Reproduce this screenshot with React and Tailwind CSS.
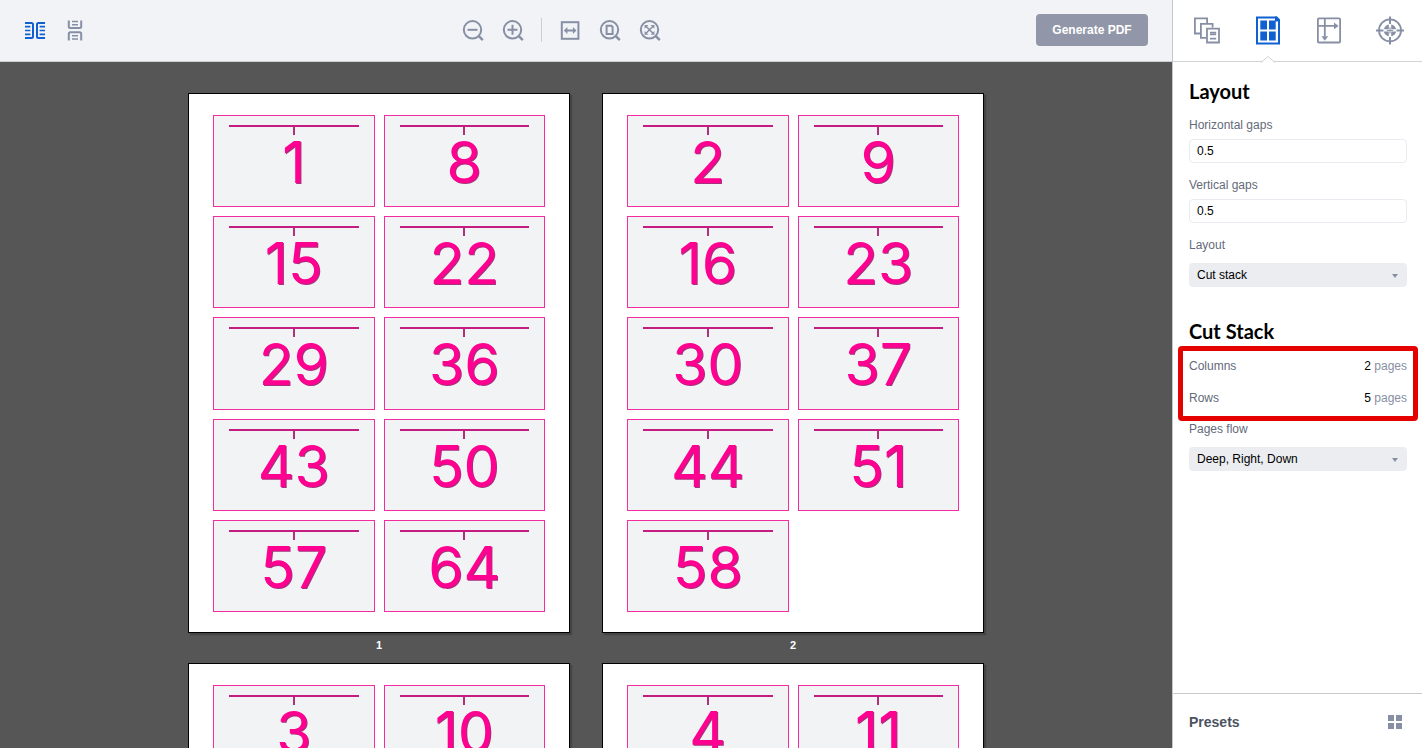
import React, { useState } from 'react';

const TOTAL_PAGES = 64;
const STACK_DEPTH = 7;
// Sheets drawn up front
const PREVIEW_SHEETS = [1, 2, 3, 4];

// Cut stack order: each sheet takes every 7th page
const pagesOnSheet = (sheet) => {
  const pages = [];
  for (let p = sheet; p <= TOTAL_PAGES; p += STACK_DEPTH) pages.push(p);
  return pages;
};

const Icon = ({ children }) => (
  <svg viewBox="0 0 24 24" className="size-6" fill="none" stroke="currentColor" strokeWidth="2" aria-hidden="true">
    {children}
  </svg>
);

const BigIcon = ({ children }) => (
  <svg viewBox="0 0 32 32" className="size-8" fill="none" stroke="currentColor" strokeWidth="1.8" aria-hidden="true">
    {children}
  </svg>
);

const Magnifier = ({ children }) => (
  <Icon>
    <circle cx="11.5" cy="11.8" r="8.7" />
    <path d="M17.6 17.9L21.8 22.1" strokeWidth="2.4" />
    {children}
  </Icon>
);

const FacingIcon = () => (
  <Icon>
    <path d="M2 5H8.5Q10 5 10 6.5V18.5Q10 20 8.5 20H2M22 5H15.5Q14 5 14 6.5V18.5Q14 20 15.5 20H22" />
    <path d="M2 8.7H7.4M2 12.5H7.4M2 16.3H7.4M22 8.7H16.6M22 12.5H16.6M22 16.3H16.6" strokeWidth="1.7" />
  </Icon>
);

const StackedIcon = () => (
  <Icon>
    <path d="M5.8 2.4V8.6Q5.8 10.1 7.3 10.1H16.7Q18.2 10.1 18.2 8.6V2.4M5.8 22.6V15.8Q5.8 14.3 7.3 14.3H16.7Q18.2 14.3 18.2 15.8V22.6" />
    <path d="M9 3.6H15M9 6.7H15M9 17.7H15M9 21H15" strokeWidth="1.5" />
  </Icon>
);

const FitWidthIcon = () => (
  <Icon>
    <rect x="3.8" y="4.2" width="16.6" height="16.6" />
    <path d="M8 12.5H16.5" />
    <path d="M5.8 12.5L9.4 9.1V15.9ZM18.5 12.5L14.9 9.1V15.9Z" fill="currentColor" stroke="none" />
  </Icon>
);

const PagesIcon = () => (
  <BigIcon>
    <path d="M9.5 19.5H3.9V4.4H16.1V9" />
    <path d="M15.3 23.9H9.9V9.8H21.6V13.5" />
    <path d="M16 14.6H28V28.5H16Z" />
    <path d="M19 18.7H25.2M19 20.5H25.2M19 24.7H25.2" strokeWidth="1.7" />
  </BigIcon>
);

const GridSheetIcon = () => (
  <BigIcon>
    <path d="M5 3.4H24.3L27 6.2V29.4H5Z" strokeWidth="2" />
    <path d="M23 2.4H25L28 5.4V7.4H23Z" fill="currentColor" stroke="none" />
    <path d="M8.3 6.4H15V15.6H8.3ZM17 6.4H23.7V15.6H17ZM8.3 17.6H15V26.6H8.3ZM17 17.6H23.7V26.6H17Z" fill="currentColor" stroke="none" />
  </BigIcon>
);

const OffsetIcon = () => (
  <BigIcon>
    <rect x="4.9" y="4.3" width="22.2" height="24.2" rx="1" />
    <path d="M11.8 4.4V22.4M5 11.9H21.5" />
    <path d="M25.6 11.9L21 8.6V15.2ZM11.8 26.8L8.5 22.2H15.1Z" fill="currentColor" stroke="none" />
  </BigIcon>
);

const MarksIcon = () => (
  <BigIcon>
    <circle cx="16" cy="16.4" r="11" />
    <circle cx="16" cy="16.4" r="6.2" fill="currentColor" stroke="none" />
    <path d="M16 9.6V23.2M9.2 16.4H22.8" stroke="white" strokeWidth="2.4" />
    <path d="M16 2.4V9.9M16 22.9V30.4M2 16.4H9.5M22.5 16.4H30" strokeWidth="2" />
    <path d="M16 13.2V19.6M12.8 16.4H19.2" strokeWidth="1" />
  </BigIcon>
);

const ToolButton = ({ label, active, children }) => (
  <button type="button" aria-label={label} className={active ? 'text-[#1160d2]' : 'text-[#878fa4]'}>
    {children}
  </button>
);

const Toolbar = () => (
  <header className="flex h-[62px] shrink-0 items-center justify-between border-b border-[#c9cfce] bg-[#f1f3f7] pr-6 pb-px pl-[23px]">
    <div className="flex gap-4">
      <ToolButton label="Side by side" active><FacingIcon /></ToolButton>
      <ToolButton label="Stacked"><StackedIcon /></ToolButton>
    </div>
    <div className="flex items-center gap-4">
      <ToolButton label="Zoom out">
        <Magnifier><path d="M6.5 11.8H16.5" /></Magnifier>
      </ToolButton>
      <ToolButton label="Zoom in">
        <Magnifier><path d="M6.5 11.8H16.5M11.5 6.8V16.8" /></Magnifier>
      </ToolButton>
      <span className="h-6 w-px bg-[#c9cdd6]" />
      <ToolButton label="Fit width"><FitWidthIcon /></ToolButton>
      <ToolButton label="Fit page">
        <Magnifier><path d="M8.6 7.7H13.4L14.6 8.9V15.9H8.6Z" /></Magnifier>
      </ToolButton>
      <ToolButton label="Fit all">
        <Magnifier>
          <path d="M8 8.3L15 15.3M15 8.3L8 15.3" strokeWidth="1.5" />
          <path d="M6.6 6.9H10.4L6.6 10.7ZM16.4 6.9V10.7L12.6 6.9ZM6.6 16.7V12.9L10.4 16.7ZM16.4 16.7H12.6L16.4 12.9Z" fill="currentColor" stroke="none" />
        </Magnifier>
      </ToolButton>
    </div>
    <button type="button" className="h-8 w-28 rounded bg-[#9197a8] text-[12px] font-bold text-white">
      Generate PDF
    </button>
  </header>
);

const Card = ({ page }) => (
  <div className="flex flex-col items-center border border-[#f52ba0] bg-[#f1f3f5] px-[15px] pt-[9px]">
    <div className="h-[2px] w-full bg-[#c41c80]" />
    <div className="h-2 w-[2px] bg-[#b0307c]" />
    <span className="font-[Inter,sans-serif] text-[57px] leading-[56px] text-[#ff0090] [text-shadow:1px_1px_0_#a8307c]">
      {page}
    </span>
  </div>
);

const Sheet = ({ number }) => (
  <figure>
    <div className="grid h-[540px] w-[382px] grid-cols-2 grid-rows-5 gap-[9px] border border-black bg-white px-6 pt-[21px] pb-5 shadow-[2px_2px_1px_#454545]">
      {pagesOnSheet(number).map((page) => (
        <Card key={page} page={page} />
      ))}
    </div>
    <figcaption className="h-[30px] text-center text-[11px] leading-6 font-bold text-white">{number}</figcaption>
  </figure>
);

const NumberField = ({ id, label, value, onChange }) => (
  <div className="mt-3 flex flex-col gap-1">
    <label htmlFor={id} className="leading-5 text-[#636a79]">{label}</label>
    <input
      id={id}
      value={value}
      onChange={(e) => onChange(e.target.value)}
      className="h-6 w-full rounded border border-[#e9ebf0] bg-white px-[7px] text-black"
    />
  </div>
);

const SelectField = ({ id, label, options, className }) => (
  <div className={`flex flex-col gap-2 ${className}`}>
    <label htmlFor={id} className="leading-5 text-[#636a79]">{label}</label>
    <div className="relative">
      <select id={id} className="block h-6 w-full appearance-none rounded bg-[#ebedf1] px-2 text-black">
        {options.map((o) => (
          <option key={o}>{o}</option>
        ))}
      </select>
      <svg viewBox="0 0 6 4" className="pointer-events-none absolute top-[11px] right-[9px] h-1 w-[6px]" aria-hidden="true">
        <path d="M0 0H6L3 4Z" fill="#878fa4" />
      </svg>
    </div>
  </div>
);

const CountRow = ({ label, count }) => (
  <div className="flex h-8 items-center justify-between">
    <span className="text-[#636a79]">{label}</span>
    <span className="text-[#878fa4]"><span className="text-black">{count}</span> pages</span>
  </div>
);

const Heading = ({ children, className }) => (
  <h2 className={`font-[Lato,sans-serif] text-[20px] leading-6 font-bold text-black ${className ?? ''}`}>{children}</h2>
);

const Sidebar = () => {
  const [horizontal, setHorizontal] = useState('0.5');
  const [vertical, setVertical] = useState('0.5');

  return (
    <aside className="flex w-[250px] shrink-0 flex-col border-l border-[#c4c6ca] bg-white text-[12px]">
      <nav className="flex h-[62px] shrink-0 items-center justify-between border-b border-[#d2d2d2] pr-4 pb-px pl-[18px]">
        <ToolButton label="Pages"><PagesIcon /></ToolButton>
        <div className="relative flex">
          <ToolButton label="Layout" active><GridSheetIcon /></ToolButton>
          {/* Notch that ties the active tab to its panel */}
          <svg viewBox="0 0 16 8" className="absolute top-[42px] left-2 h-2 w-4" aria-hidden="true">
            <path d="M1 6.5L8 0.5L15 6.5V8H1Z" fill="white" />
            <path d="M1 6.5L8 0.5L15 6.5" fill="none" stroke="#d2d2d2" />
          </svg>
        </div>
        <ToolButton label="Offsets"><OffsetIcon /></ToolButton>
        <ToolButton label="Marks"><MarksIcon /></ToolButton>
      </nav>

      <div className="flex-1 pt-[17px] pr-[15px] pl-4">
        <Heading>Layout</Heading>
        <NumberField id="h-gaps" label="Horizontal gaps" value={horizontal} onChange={setHorizontal} />
        <NumberField id="v-gaps" label="Vertical gaps" value={vertical} onChange={setVertical} />
        <SelectField id="layout" label="Layout" options={['Cut stack', 'Grid', 'Booklet']} className="mt-3" />

        <Heading className="mt-8">Cut Stack</Heading>
        <div className="relative mt-[7px]">
          <CountRow label="Columns" count={2} />
          <CountRow label="Rows" count={5} />
          <div className="pointer-events-none absolute -inset-x-[11px] -top-1 -bottom-[7px] rounded-sm border-[5px] border-[#e50000]" />
        </div>
        <SelectField id="flow" label="Pages flow" options={['Deep, Right, Down', 'Deep, Down, Right']} className="mt-[5px]" />
      </div>

      <footer className="flex h-[55px] shrink-0 items-center justify-between border-t border-[#c8cacd] pt-[2px] pr-5 pl-4">
        <span className="text-[14px] font-bold text-[#4c5362]">Presets</span>
        <button type="button" aria-label="Show presets" className="text-[#878fa4]">
          <svg viewBox="0 0 14 14" className="size-[14px]" fill="currentColor" aria-hidden="true">
            <path d="M0 0H6V6H0ZM8 0H14V6H8ZM0 8H6V14H0ZM8 8H14V14H8Z" />
          </svg>
        </button>
      </footer>
    </aside>
  );
};

export default function App() {
  return (
    <div className="flex h-screen overflow-hidden font-['Liberation_Sans',Arial,sans-serif]">
      <div className="flex min-w-0 flex-1 flex-col">
        <Toolbar />
        <main className="min-h-0 flex-1 overflow-y-auto bg-[#565656] pt-[31px] [scrollbar-width:none]">
          <div className="mx-auto grid w-fit grid-cols-2 gap-x-8">
            {PREVIEW_SHEETS.map((n) => (
              <Sheet key={n} number={n} />
            ))}
          </div>
        </main>
      </div>
      <Sidebar />
    </div>
  );
}
